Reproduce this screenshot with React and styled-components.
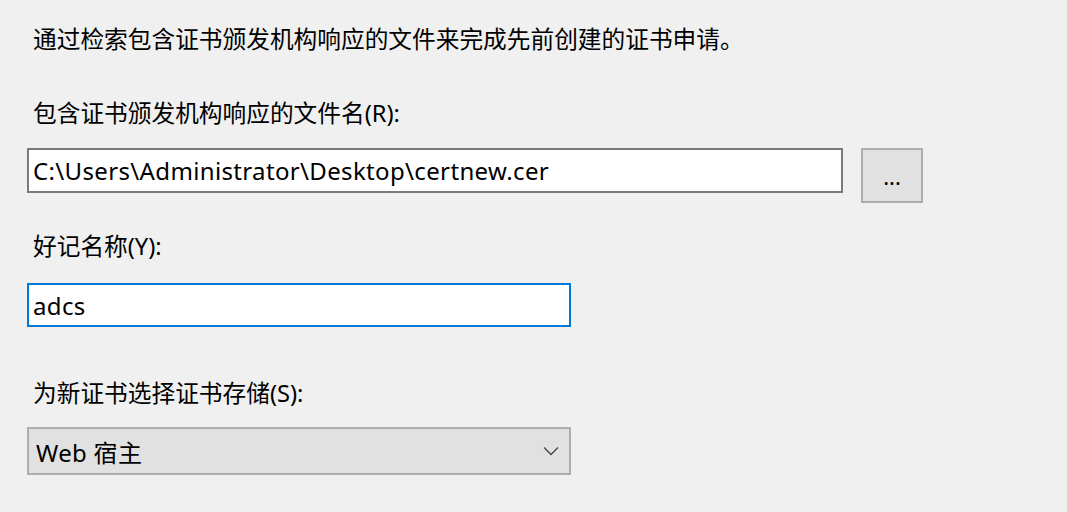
import React from "react";
import styled, { createGlobalStyle } from "styled-components";

const GlobalStyle = createGlobalStyle`
  html, body {
    margin: 0;
    padding: 0;
    background: #f0f0f0;
  }
  body {
    font-family: "Noto Sans", "Noto Sans CJK SC", sans-serif;
    color: #000;
  }
`;

const Page = styled.div`
  width: 1067px;
  height: 512px;
  box-sizing: border-box;
  padding: 24px 0 0 27px;
  display: flex;
  flex-direction: column;
  overflow: hidden;
`;

const Text = styled.div`
  margin-top: ${(p) => p.$top || 0}px;
  padding-left: 6px;
  font-size: 23.7px;
  line-height: 30px;
  height: 30px;
  white-space: nowrap;
`;

const Row = styled.div`
  margin-top: ${(p) => p.$top || 0}px;
  display: flex;
  align-items: flex-start;
  gap: 18px;
`;

const Field = styled.input`
  box-sizing: border-box;
  width: ${(p) => p.$width}px;
  height: ${(p) => p.$height}px;
  margin: ${(p) => p.$top || 0}px 0 0 0;
  padding: 0 0 0 4px;
  border: 2px solid ${(p) => (p.$focused ? "#0078d7" : "#7a7a7a")};
  background: #fff;
  font-family: "Noto Sans", "Noto Sans CJK SC", sans-serif;
  font-size: 24px;
  letter-spacing: 0.35px;
  color: #000;
  outline: none;
`;

const BrowseButton = styled.button`
  box-sizing: border-box;
  width: 62px;
  height: 55px;
  border: 2px solid #adadad;
  background: #e1e1e1;
  font-family: "Noto Sans", sans-serif;
  font-size: 22px;
  color: #000;
  padding: 0;
`;

const Combo = styled.div`
  box-sizing: border-box;
  margin-top: ${(p) => p.$top || 0}px;
  width: 544px;
  height: 48px;
  border: 2px solid #adadad;
  background: #e1e1e1;
  display: flex;
  align-items: center;
  justify-content: space-between;
  padding: 0 10px 0 7px;
  font-size: 24px;
  letter-spacing: 0.3px;
`;

const Chevron = () => (
  <svg width="16" height="10" viewBox="0 0 16 10">
    <path d="M1 1.5 L8 8.5 L15 1.5" fill="none" stroke="#444" strokeWidth="1.3" />
  </svg>
);

export default function App() {
  return (
    <>
      <GlobalStyle />
      <Page>
        <Text>通过检索包含证书颁发机构响应的文件来完成先前创建的证书申请。</Text>
        <Text $top={44}>包含证书颁发机构响应的文件名(R):</Text>
        <Row $top={20}>
          <Field
            $width={816}
            $height={45}
            readOnly
            value="C:\Users\Administrator\Desktop\certnew.cer"
          />
          <BrowseButton>...</BrowseButton>
        </Row>
        <Text $top={28}>好记名称(Y):</Text>
        <Field $width={544} $height={44} $top={22} $focused readOnly value="adcs" />
        <Text $top={51}>为新证书选择证书存储(S):</Text>
        <Combo $top={19}>
          <span>Web 宿主</span>
          <Chevron />
        </Combo>
      </Page>
    </>
  );
}
